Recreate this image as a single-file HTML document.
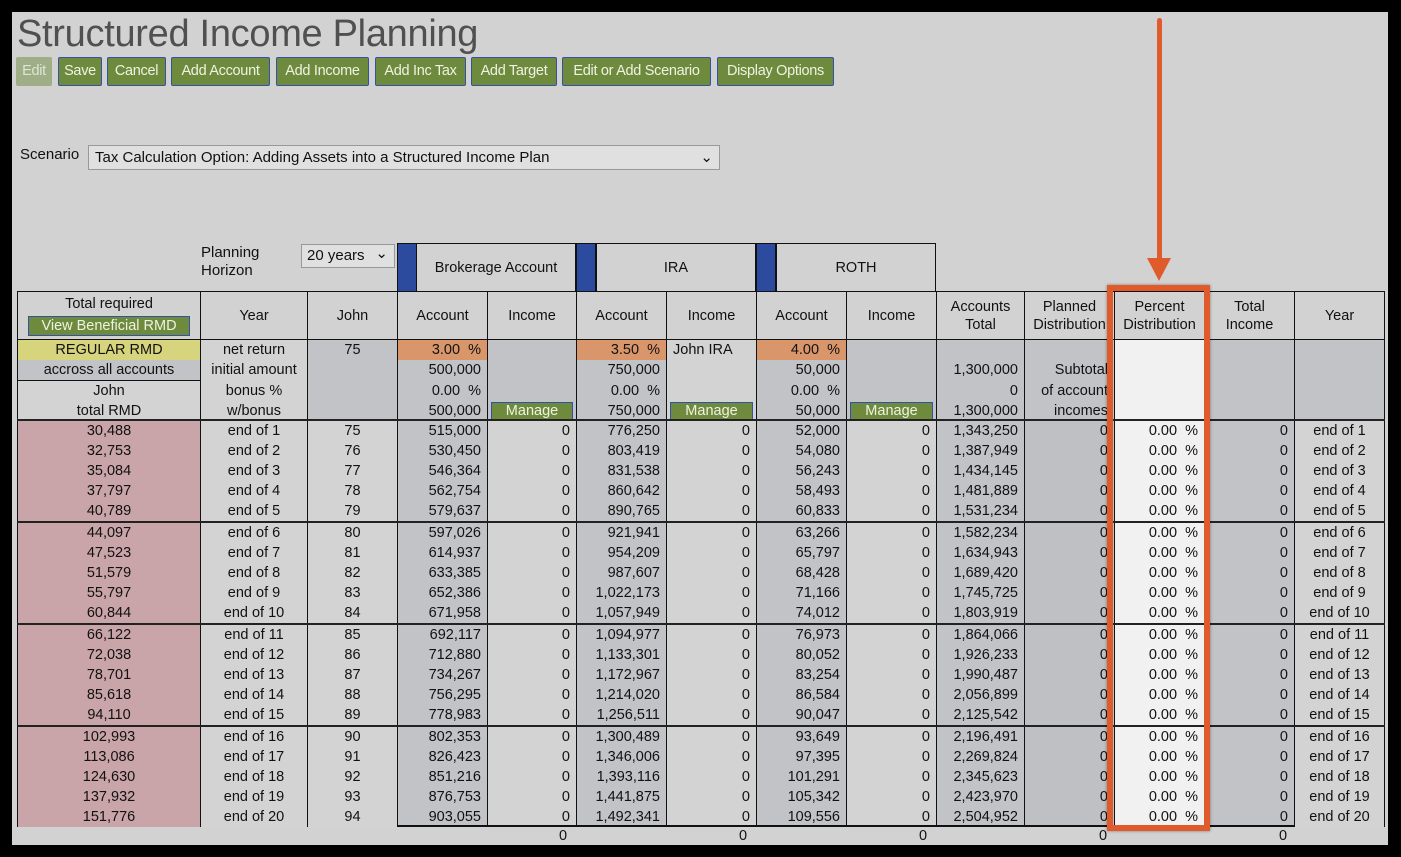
<!DOCTYPE html>
<html><head><meta charset="utf-8"><style>
*{box-sizing:border-box;margin:0;padding:0}
body{width:1401px;height:857px;background:#000;position:relative;overflow:hidden;font-family:"Liberation Sans",sans-serif;color:#111}
#pg{position:absolute;left:12px;top:12px;width:1376px;height:833px;background:#d2d2d2}
.a{position:absolute}
h1{position:absolute;left:17px;top:13px;font-weight:normal;font-size:38px;color:#505050;letter-spacing:-0.3px;font-family:"Liberation Sans",sans-serif}
.btn{position:absolute;top:57px;height:29px;background:#6e8b3d;border:1.5px solid #3451a8;color:#eef2e4;font-family:"Liberation Sans",sans-serif;font-size:14.5px;letter-spacing:-0.3px;line-height:26px;text-align:center;border-radius:2px;white-space:nowrap}
.sel{position:absolute;background:#e0e0e0;border:1px solid #999;font-size:15px}
table{position:absolute;left:17px;top:291px;border-collapse:collapse;table-layout:fixed;width:1367px;font-size:14.5px}
td{height:20px;padding:0 6px;white-space:nowrap;overflow:hidden;line-height:20px;border-left:1px solid #111;border-right:1px solid #111}
.h td{height:48px;border:1.5px solid #111;text-align:center;line-height:18px;background:#d2d2d2}
.r{text-align:right}.c{text-align:center}
.pk{background:#c9a4a8}.lt{background:#d3d3d3}.dk{background:#c2c3c6}.dd{background:#bfc0c3}.wh{background:#f1f1f1}
.or{background:#d9966a}.ye{background:#d6d47c}
.g td{border-top:2px solid #222}
.mb{display:block;background:#6e8b3d;border:1.5px solid #3451a8;color:#eef2e4;text-align:center;line-height:16px;height:18px;margin:1px -3px 0}
.acc{position:absolute;top:243px;height:48px;border:1.5px solid #111;border-bottom:none;background:#d2d2d2;font-size:14.5px;text-align:center;line-height:48px}
.bl{position:absolute;top:243px;height:48px;width:20px;background:#2c4a9e;border:1.5px solid #111;border-bottom:none}
</style></head><body>
<div id="pg"></div>
<h1>Structured Income Planning</h1>
<div class="btn" style="left:16px;width:36px;background:#9fae86;border-color:#9fae86;color:#dfe5d2">Edit</div>
<div class="btn" style="left:58px;width:44px">Save</div>
<div class="btn" style="left:107px;width:59px">Cancel</div>
<div class="btn" style="left:171px;width:99px">Add Account</div>
<div class="btn" style="left:276px;width:93px">Add Income</div>
<div class="btn" style="left:375px;width:91px">Add Inc Tax</div>
<div class="btn" style="left:471px;width:86px">Add Target</div>
<div class="btn" style="left:562px;width:149px">Edit or Add Scenario</div>
<div class="btn" style="left:717px;width:117px">Display Options</div>
<div class="a" style="left:20px;top:146px;font-size:15px">Scenario</div>
<div class="sel" style="left:88px;top:145px;width:632px;height:25px;line-height:23px;padding-left:6px">Tax Calculation Option: Adding Assets into a Structured Income Plan<span style="position:absolute;right:6px;top:0">&#8964;</span></div>
<div class="a" style="left:201px;top:244px;font-size:15px;line-height:18px">Planning<br>Horizon</div>
<div class="sel" style="left:301px;top:244px;width:94px;height:24px;line-height:22px;padding-left:5px">20 years<span style="position:absolute;right:6px;top:-2px">&#8964;</span></div>
<div class="bl" style="left:397px"></div><div class="acc" style="left:416px;width:160px">Brokerage Account</div>
<div class="bl" style="left:576px"></div><div class="acc" style="left:596px;width:160px">IRA</div>
<div class="bl" style="left:756px"></div><div class="acc" style="left:776px;width:160px">ROTH</div>
<table>
<colgroup><col style="width:183px"><col style="width:107px"><col style="width:90px"><col style="width:90px"><col style="width:89px"><col style="width:90px"><col style="width:90px"><col style="width:90px"><col style="width:90px"><col style="width:88px"><col style="width:90px"><col style="width:90px"><col style="width:90px"><col style="width:90px"></colgroup>
<tr class="h"><td style="padding:0 8px;vertical-align:top;padding-top:3px">Total required<span class="mb" style="margin:3px 2px 0;height:20px;line-height:18px">View Beneficial RMD</span></td><td>Year</td><td>John</td><td>Account</td><td>Income</td><td>Account</td><td>Income</td><td>Account</td><td>Income</td><td>Accounts<br>Total</td><td>Planned<br>Distribution</td><td class="wh">Percent<br>Distribution</td><td>Total<br>Income</td><td>Year</td></tr>
<tr><td class="ye c">REGULAR RMD</td><td class="lt c">net return</td><td class="dk c" rowspan="4" style="vertical-align:top">75</td><td class="or r">3.00 &nbsp;%</td><td class="dk" rowspan="3"></td><td class="or r">3.50 &nbsp;%</td><td class="lt">John IRA</td><td class="or r">4.00 &nbsp;%</td><td class="dk" rowspan="3"></td><td class="dk r"></td><td class="dk r"></td><td class="wh" rowspan="4"></td><td class="dk" rowspan="4"></td><td class="dk" rowspan="4"></td></tr>
<tr><td class="dk c">accross all accounts</td><td class="lt c">initial amount</td><td class="dk r">500,000</td><td class="dk r">750,000</td><td class="lt"></td><td class="dk r">50,000</td><td class="dk r">1,300,000</td><td class="dk r">Subtotal</td></tr>
<tr><td class="lt c" rowspan="2" style="border-top:1.5px solid #111;line-height:20px">John<br>total RMD</td><td class="lt c">bonus %</td><td class="dk r">0.00 &nbsp;%</td><td class="dk r">0.00 &nbsp;%</td><td class="lt"></td><td class="dk r">0.00 &nbsp;%</td><td class="dk r">0</td><td class="dk r">of account</td></tr>
<tr><td class="lt c">w/bonus</td><td class="dk r">500,000</td><td class="dk"><span class="mb">Manage</span></td><td class="dk r">750,000</td><td class="lt"><span class="mb">Manage</span></td><td class="dk r">50,000</td><td class="dk"><span class="mb">Manage</span></td><td class="dk r">1,300,000</td><td class="dk r">incomes</td></tr>
</table>
<table style="top:419px">
<colgroup><col style="width:183px"><col style="width:107px"><col style="width:90px"><col style="width:90px"><col style="width:89px"><col style="width:90px"><col style="width:90px"><col style="width:90px"><col style="width:90px"><col style="width:88px"><col style="width:90px"><col style="width:90px"><col style="width:90px"><col style="width:90px"></colgroup>
<tbody>
<tr class="g"><td class="pk c">30,488</td><td class="lt c">end of 1</td><td class="lt c">75</td><td class="dk r">515,000</td><td class="lt r">0</td><td class="dk r">776,250</td><td class="lt r">0</td><td class="dk r">52,000</td><td class="lt r">0</td><td class="dk r">1,343,250</td><td class="dd r">0</td><td class="wh r">0.00 &nbsp;%</td><td class="dk r">0</td><td class="lt c">end of 1</td></tr>
<tr><td class="pk c">32,753</td><td class="lt c">end of 2</td><td class="lt c">76</td><td class="dk r">530,450</td><td class="lt r">0</td><td class="dk r">803,419</td><td class="lt r">0</td><td class="dk r">54,080</td><td class="lt r">0</td><td class="dk r">1,387,949</td><td class="dd r">0</td><td class="wh r">0.00 &nbsp;%</td><td class="dk r">0</td><td class="lt c">end of 2</td></tr>
<tr><td class="pk c">35,084</td><td class="lt c">end of 3</td><td class="lt c">77</td><td class="dk r">546,364</td><td class="lt r">0</td><td class="dk r">831,538</td><td class="lt r">0</td><td class="dk r">56,243</td><td class="lt r">0</td><td class="dk r">1,434,145</td><td class="dd r">0</td><td class="wh r">0.00 &nbsp;%</td><td class="dk r">0</td><td class="lt c">end of 3</td></tr>
<tr><td class="pk c">37,797</td><td class="lt c">end of 4</td><td class="lt c">78</td><td class="dk r">562,754</td><td class="lt r">0</td><td class="dk r">860,642</td><td class="lt r">0</td><td class="dk r">58,493</td><td class="lt r">0</td><td class="dk r">1,481,889</td><td class="dd r">0</td><td class="wh r">0.00 &nbsp;%</td><td class="dk r">0</td><td class="lt c">end of 4</td></tr>
<tr><td class="pk c">40,789</td><td class="lt c">end of 5</td><td class="lt c">79</td><td class="dk r">579,637</td><td class="lt r">0</td><td class="dk r">890,765</td><td class="lt r">0</td><td class="dk r">60,833</td><td class="lt r">0</td><td class="dk r">1,531,234</td><td class="dd r">0</td><td class="wh r">0.00 &nbsp;%</td><td class="dk r">0</td><td class="lt c">end of 5</td></tr>
<tr class="g"><td class="pk c">44,097</td><td class="lt c">end of 6</td><td class="lt c">80</td><td class="dk r">597,026</td><td class="lt r">0</td><td class="dk r">921,941</td><td class="lt r">0</td><td class="dk r">63,266</td><td class="lt r">0</td><td class="dk r">1,582,234</td><td class="dd r">0</td><td class="wh r">0.00 &nbsp;%</td><td class="dk r">0</td><td class="lt c">end of 6</td></tr>
<tr><td class="pk c">47,523</td><td class="lt c">end of 7</td><td class="lt c">81</td><td class="dk r">614,937</td><td class="lt r">0</td><td class="dk r">954,209</td><td class="lt r">0</td><td class="dk r">65,797</td><td class="lt r">0</td><td class="dk r">1,634,943</td><td class="dd r">0</td><td class="wh r">0.00 &nbsp;%</td><td class="dk r">0</td><td class="lt c">end of 7</td></tr>
<tr><td class="pk c">51,579</td><td class="lt c">end of 8</td><td class="lt c">82</td><td class="dk r">633,385</td><td class="lt r">0</td><td class="dk r">987,607</td><td class="lt r">0</td><td class="dk r">68,428</td><td class="lt r">0</td><td class="dk r">1,689,420</td><td class="dd r">0</td><td class="wh r">0.00 &nbsp;%</td><td class="dk r">0</td><td class="lt c">end of 8</td></tr>
<tr><td class="pk c">55,797</td><td class="lt c">end of 9</td><td class="lt c">83</td><td class="dk r">652,386</td><td class="lt r">0</td><td class="dk r">1,022,173</td><td class="lt r">0</td><td class="dk r">71,166</td><td class="lt r">0</td><td class="dk r">1,745,725</td><td class="dd r">0</td><td class="wh r">0.00 &nbsp;%</td><td class="dk r">0</td><td class="lt c">end of 9</td></tr>
<tr><td class="pk c">60,844</td><td class="lt c">end of 10</td><td class="lt c">84</td><td class="dk r">671,958</td><td class="lt r">0</td><td class="dk r">1,057,949</td><td class="lt r">0</td><td class="dk r">74,012</td><td class="lt r">0</td><td class="dk r">1,803,919</td><td class="dd r">0</td><td class="wh r">0.00 &nbsp;%</td><td class="dk r">0</td><td class="lt c">end of 10</td></tr>
<tr class="g"><td class="pk c">66,122</td><td class="lt c">end of 11</td><td class="lt c">85</td><td class="dk r">692,117</td><td class="lt r">0</td><td class="dk r">1,094,977</td><td class="lt r">0</td><td class="dk r">76,973</td><td class="lt r">0</td><td class="dk r">1,864,066</td><td class="dd r">0</td><td class="wh r">0.00 &nbsp;%</td><td class="dk r">0</td><td class="lt c">end of 11</td></tr>
<tr><td class="pk c">72,038</td><td class="lt c">end of 12</td><td class="lt c">86</td><td class="dk r">712,880</td><td class="lt r">0</td><td class="dk r">1,133,301</td><td class="lt r">0</td><td class="dk r">80,052</td><td class="lt r">0</td><td class="dk r">1,926,233</td><td class="dd r">0</td><td class="wh r">0.00 &nbsp;%</td><td class="dk r">0</td><td class="lt c">end of 12</td></tr>
<tr><td class="pk c">78,701</td><td class="lt c">end of 13</td><td class="lt c">87</td><td class="dk r">734,267</td><td class="lt r">0</td><td class="dk r">1,172,967</td><td class="lt r">0</td><td class="dk r">83,254</td><td class="lt r">0</td><td class="dk r">1,990,487</td><td class="dd r">0</td><td class="wh r">0.00 &nbsp;%</td><td class="dk r">0</td><td class="lt c">end of 13</td></tr>
<tr><td class="pk c">85,618</td><td class="lt c">end of 14</td><td class="lt c">88</td><td class="dk r">756,295</td><td class="lt r">0</td><td class="dk r">1,214,020</td><td class="lt r">0</td><td class="dk r">86,584</td><td class="lt r">0</td><td class="dk r">2,056,899</td><td class="dd r">0</td><td class="wh r">0.00 &nbsp;%</td><td class="dk r">0</td><td class="lt c">end of 14</td></tr>
<tr><td class="pk c">94,110</td><td class="lt c">end of 15</td><td class="lt c">89</td><td class="dk r">778,983</td><td class="lt r">0</td><td class="dk r">1,256,511</td><td class="lt r">0</td><td class="dk r">90,047</td><td class="lt r">0</td><td class="dk r">2,125,542</td><td class="dd r">0</td><td class="wh r">0.00 &nbsp;%</td><td class="dk r">0</td><td class="lt c">end of 15</td></tr>
<tr class="g"><td class="pk c">102,993</td><td class="lt c">end of 16</td><td class="lt c">90</td><td class="dk r">802,353</td><td class="lt r">0</td><td class="dk r">1,300,489</td><td class="lt r">0</td><td class="dk r">93,649</td><td class="lt r">0</td><td class="dk r">2,196,491</td><td class="dd r">0</td><td class="wh r">0.00 &nbsp;%</td><td class="dk r">0</td><td class="lt c">end of 16</td></tr>
<tr><td class="pk c">113,086</td><td class="lt c">end of 17</td><td class="lt c">91</td><td class="dk r">826,423</td><td class="lt r">0</td><td class="dk r">1,346,006</td><td class="lt r">0</td><td class="dk r">97,395</td><td class="lt r">0</td><td class="dk r">2,269,824</td><td class="dd r">0</td><td class="wh r">0.00 &nbsp;%</td><td class="dk r">0</td><td class="lt c">end of 17</td></tr>
<tr><td class="pk c">124,630</td><td class="lt c">end of 18</td><td class="lt c">92</td><td class="dk r">851,216</td><td class="lt r">0</td><td class="dk r">1,393,116</td><td class="lt r">0</td><td class="dk r">101,291</td><td class="lt r">0</td><td class="dk r">2,345,623</td><td class="dd r">0</td><td class="wh r">0.00 &nbsp;%</td><td class="dk r">0</td><td class="lt c">end of 18</td></tr>
<tr><td class="pk c">137,932</td><td class="lt c">end of 19</td><td class="lt c">93</td><td class="dk r">876,753</td><td class="lt r">0</td><td class="dk r">1,441,875</td><td class="lt r">0</td><td class="dk r">105,342</td><td class="lt r">0</td><td class="dk r">2,423,970</td><td class="dd r">0</td><td class="wh r">0.00 &nbsp;%</td><td class="dk r">0</td><td class="lt c">end of 19</td></tr>
<tr><td class="pk c">151,776</td><td class="lt c">end of 20</td><td class="lt c">94</td><td class="dk r">903,055</td><td class="lt r">0</td><td class="dk r">1,492,341</td><td class="lt r">0</td><td class="dk r">109,556</td><td class="lt r">0</td><td class="dk r">2,504,952</td><td class="dd r">0</td><td class="wh r">0.00 &nbsp;%</td><td class="dk r">0</td><td class="lt c">end of 20</td></tr>
</tbody></table>
<div class="a" style="left:397px;top:825px;width:897px;height:2px;background:#111"></div>
<div class="a" style="left:17px;top:827px;width:1367px;height:18px;font-size:14.5px;line-height:18px">
<span class="a" style="left:542px">0</span><span class="a" style="left:722px">0</span><span class="a" style="left:902px">0</span><span class="a" style="left:1082px">0</span><span class="a" style="left:1262px">0</span></div>
<div class="a" style="left:1107px;top:285px;width:103px;height:546px;border:6px solid #e05b2c;box-shadow:0 0 3px rgba(0,0,0,.4)"></div>
<div class="a" style="left:1157px;top:18px;width:5px;height:244px;background:#e05b2c;border-radius:3px"></div>
<svg class="a" style="left:1146px;top:256px" width="26" height="26"><polygon points="1,2 25,2 13,25" fill="#e05b2c"/></svg>
</body></html>
